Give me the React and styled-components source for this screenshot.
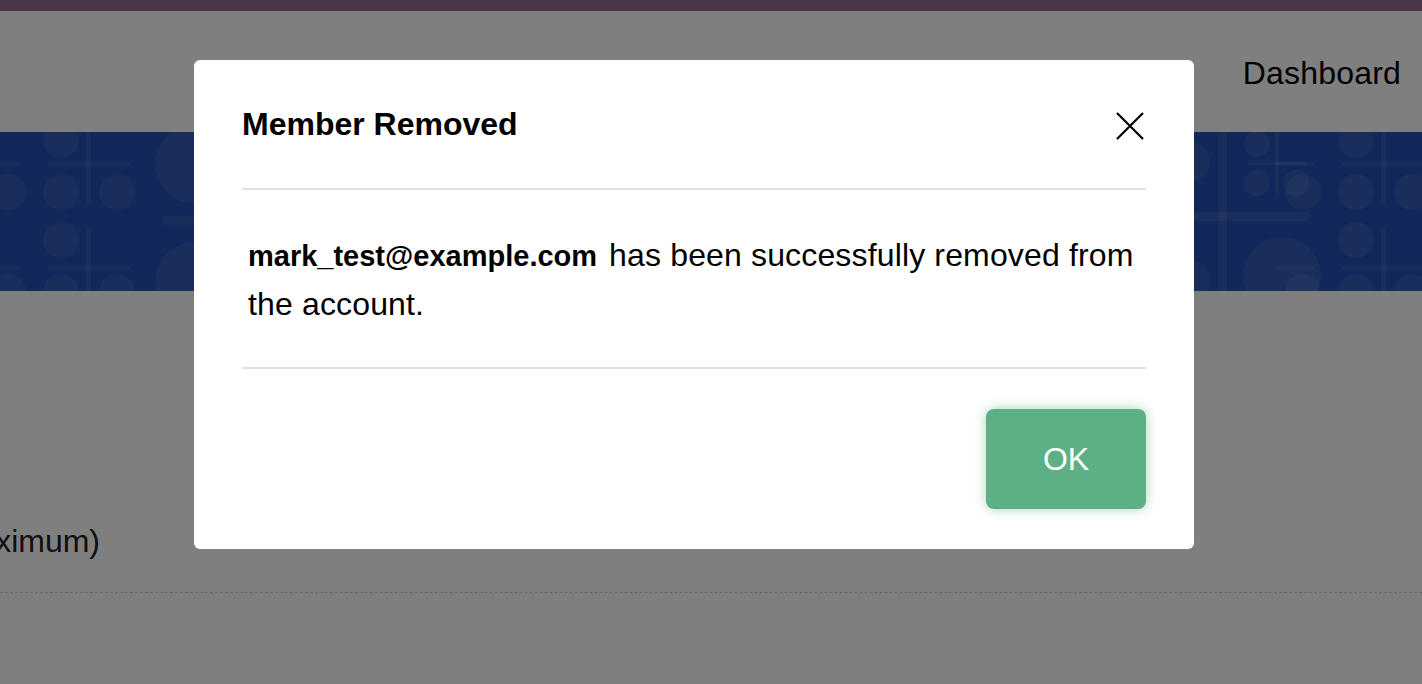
import React from "react";
import styled, { createGlobalStyle } from "styled-components";

const GlobalStyle = createGlobalStyle`
  html, body {
    margin: 0;
    padding: 0;
    background: #ffffff;
    font-family: "Liberation Sans", Arial, sans-serif;
    color: #000000;
  }
`;

const Page = styled.div`
  position: relative;
  width: 1422px;
  height: 684px;
  overflow: hidden;
  background: #ffffff;
`;

const TopStrip = styled.div`
  height: 11px;
  background: #946e8a;
`;

const NavBar = styled.nav`
  display: flex;
  align-items: center;
  justify-content: flex-end;
  height: 121px;
  padding: 3px 21px 0;
  box-sizing: border-box;
`;

const NavLink = styled.a`
  font-size: 32px;
  letter-spacing: 0.2px;
  color: #000000;
  text-decoration: none;
`;

const Banner = styled.div`
  height: 159px;
  background: #2450b4;
  overflow: hidden;

  svg {
    display: block;
  }
`;

const Content = styled.div`
  padding-top: 232px;
`;

const FieldRow = styled.div`
  display: flex;
  padding-bottom: 32px;
  border-bottom: 1px dashed #cfcfcf;
`;

const FieldLabel = styled.div`
  display: flex;
  justify-content: flex-end;
  width: 100px;
  overflow: hidden;
  white-space: nowrap;
  font-size: 32px;
  color: #222222;
`;

const Overlay = styled.div`
  position: absolute;
  inset: 0;
  background: rgba(0, 0, 0, 0.5);
  padding: 60px 0 0 194px;
`;

const Modal = styled.div`
  width: 1000px;
  padding: 0 48px;
  box-sizing: border-box;
  background: #ffffff;
  border-radius: 6px;
`;

const ModalHeader = styled.div`
  display: flex;
  align-items: center;
  justify-content: space-between;
  height: 128px;
  border-bottom: 2px solid #dee2e6;
`;

const ModalTitle = styled.h2`
  margin: 0;
  font-size: 32px;
  font-weight: 700;
`;

const CloseButton = styled.button`
  display: flex;
  align-items: center;
  justify-content: center;
  width: 32px;
  height: 32px;
  margin-top: 4px;
  padding: 0;
  border: none;
  background: none;
  cursor: pointer;
`;

const ModalBody = styled.div`
  padding: 41px 6px 39px;
  font-size: 32px;
  line-height: 48px;
  letter-spacing: 0.15px;
  border-bottom: 2px solid #dee2e6;
`;

const Email = styled.strong`
  margin-right: 3px;
  font-size: 29px;
  font-weight: 700;
  letter-spacing: 0;
`;

const ModalFooter = styled.div`
  display: flex;
  justify-content: flex-end;
  padding: 40px 0;
`;

const OkButton = styled.button`
  width: 160px;
  height: 100px;
  border: none;
  border-radius: 8px;
  background: #5cb083;
  color: #ffffff;
  font-family: "Liberation Sans", Arial, sans-serif;
  font-size: 32px;
  box-shadow: 0 0 12px rgba(92, 176, 131, 0.55);
  cursor: pointer;
`;

function BannerPattern() {
  const dot = "rgba(255,255,255,0.075)";
  const tile = (x) => (
    <g key={x} fill={dot}>
      <circle cx={x + 61} cy={8} r={18} />
      <circle cx={x + 8} cy={60} r={18} />
      <circle cx={x + 61} cy={60} r={18} />
      <circle cx={x + 117} cy={60} r={18} />
      <circle cx={x + 61} cy={108} r={18} />
      <circle cx={x + 8} cy={160} r={18} />
      <circle cx={x + 61} cy={160} r={18} />
      <circle cx={x + 117} cy={160} r={18} />
      <rect x={x + 86} y={0} width={5} height={73} rx={2.5} />
      <rect x={x + 86} y={95} width={5} height={70} rx={2.5} />
      <rect x={x + 47} y={30} width={84} height={4} rx={2} />
      <rect x={x + 47} y={134} width={84} height={4} rx={2} />
      <rect x={x - 20} y={30} width={40} height={4} rx={2} />
      <rect x={x - 20} y={134} width={40} height={4} rx={2} />
    </g>
  );
  return (
    <svg width="1422" height="159" viewBox="0 0 1422 159">
      {tile(0)}
      <g fill={dot}>
        <circle cx={195} cy={32} r={40} />
        <circle cx={195} cy={150} r={40} />
        <rect x={162} y={84} width={60} height={9} rx={4.5} />
        <circle cx={1190} cy={30} r={20} />
        <circle cx={1190} cy={148} r={20} />
        <rect x={1218} y={0} width={9} height={159} />
        <rect x={1190} y={80} width={121} height={9} rx={4.5} />
        <circle cx={1257} cy={12} r={13} />
        <circle cx={1257} cy={51} r={13} />
        <circle cx={1296} cy={51} r={13} />
        <rect x={1275} y={0} width={4} height={66} rx={2} />
        <rect x={1248} y={30} width={58} height={3} rx={1.5} />
        <circle cx={1282} cy={144} r={39} />
      </g>
      {tile(1295)}
    </svg>
  );
}

function CloseIcon() {
  return (
    <svg width="28" height="28" viewBox="0 0 28 28">
      <path
        d="M1 1 L27 27 M27 1 L1 27"
        stroke="#000000"
        strokeWidth="2.2"
        fill="none"
      />
    </svg>
  );
}

export default function App() {
  return (
    <>
      <GlobalStyle />
      <Page>
        <TopStrip />
        <NavBar>
          <NavLink href="#">Dashboard</NavLink>
        </NavBar>
        <Banner>
          <BannerPattern />
        </Banner>
        <Content>
          <FieldRow>
            <FieldLabel>Members (10 maximum)</FieldLabel>
          </FieldRow>
        </Content>

        <Overlay>
          <Modal>
            <ModalHeader>
              <ModalTitle>Member Removed</ModalTitle>
              <CloseButton aria-label="Close">
                <CloseIcon />
              </CloseButton>
            </ModalHeader>
            <ModalBody>
              <Email>mark_test@example.com</Email> has been successfully
              removed from the account.
            </ModalBody>
            <ModalFooter>
              <OkButton>OK</OkButton>
            </ModalFooter>
          </Modal>
        </Overlay>
      </Page>
    </>
  );
}
